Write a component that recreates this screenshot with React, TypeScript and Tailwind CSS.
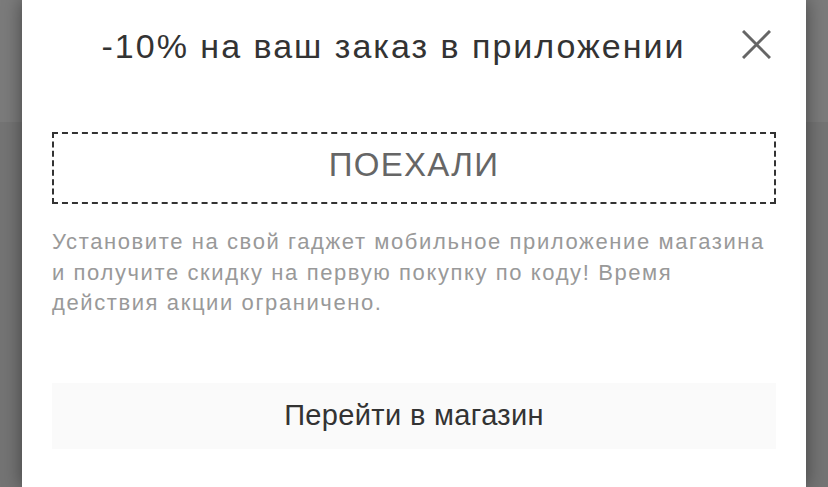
import React from 'react';

export default function App() {
  return (
    <div
      className="relative h-[487px] w-full overflow-hidden bg-[#747474]"
      style={{ fontFamily: '"Liberation Sans", Arial, sans-serif' }}
    >
      {/* dimmed page header behind the overlay */}
      <div className="h-[122px] w-full bg-[#7b7b7b]" />

      {/* MODAL */}
      <div className="absolute left-[22px] top-0 h-[487px] w-[784px] bg-white shadow-[0_0_18px_rgba(0,0,0,0.45)]">
        <div className="flex items-start pl-[30px] pr-[35px] pt-[27px]">
          <h2 className="flex-1 text-center text-[34px] leading-[38px] tracking-[2px] text-[#333]">
            -10% на ваш заказ в приложении
          </h2>
          <button className="ml-[7px] mt-[3px] h-[29px] w-[29px] text-[#666]" aria-label="Закрыть">
            <svg viewBox="0 0 29 29" className="h-[29px] w-[29px]" fill="none" stroke="currentColor" strokeWidth="3">
              <path d="M1 1 L28 28 M28 1 L1 28" />
            </svg>
          </button>
        </div>

        <div className="px-[30px]">
          <div className="mt-[67px] flex h-[72px] items-center justify-center border-2 border-dashed border-[#333] pb-[7px]">
            <span className="text-[33px] leading-[40px] tracking-[1.3px] text-[#666]">ПОЕХАЛИ</span>
          </div>

          <p className="mt-[23px] text-[22px] leading-[30.5px] tracking-[1.6px] text-[#999]">
            Установите на свой гаджет мобильное приложение магазина и получите скидку на первую покупку по коду!
            Время действия акции ограничено.
          </p>

          <button className="mt-[64px] flex h-[66px] w-full items-center justify-center bg-[#fafafa] text-[29px] tracking-[0.35px] text-[#333]">
            Перейти в магазин
          </button>
        </div>
      </div>
    </div>
  );
}
